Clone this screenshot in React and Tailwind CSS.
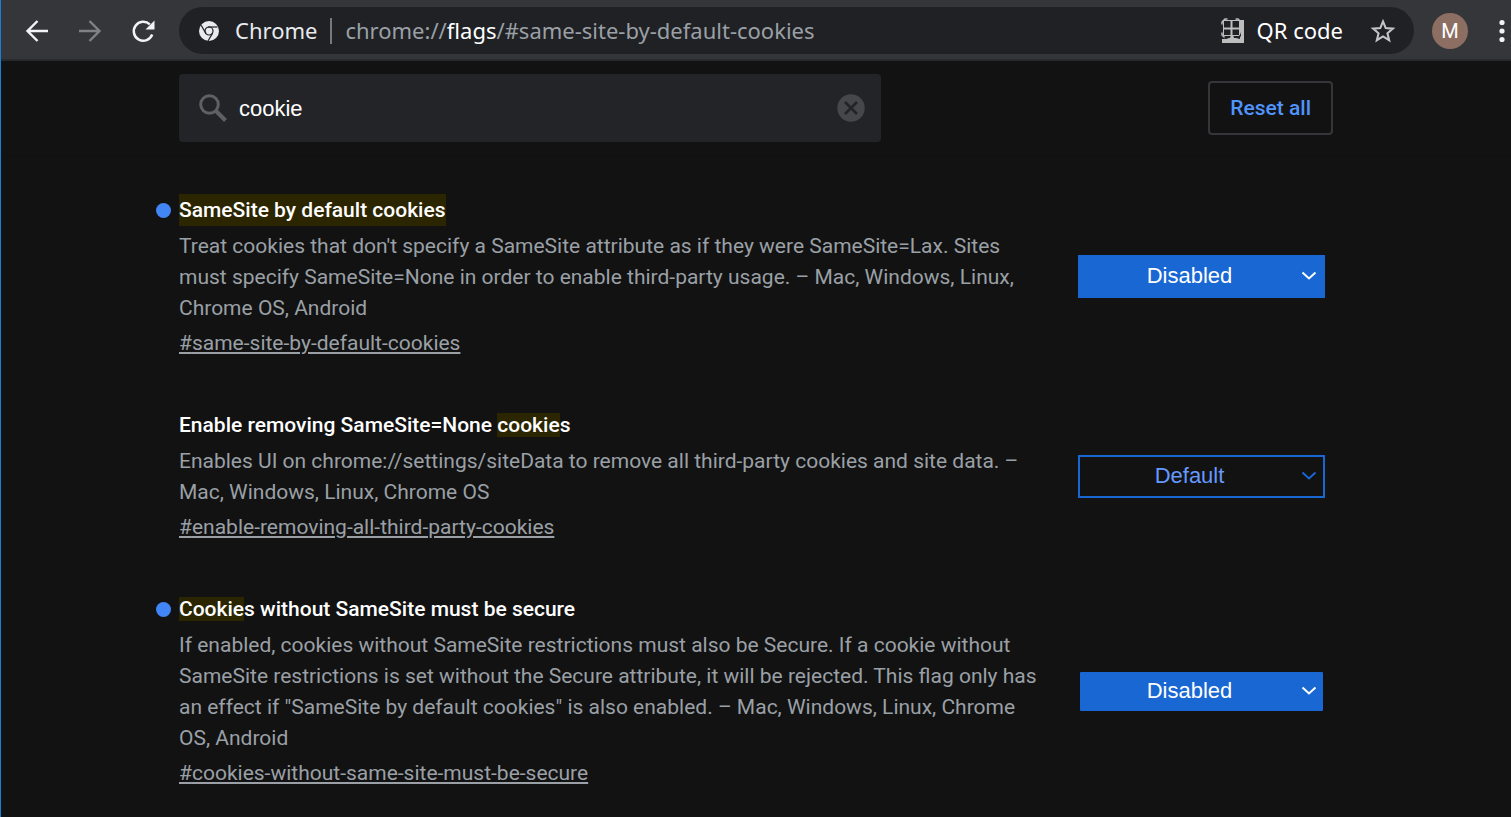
import React, { useState } from "react";

const flags = [
  {
    id: "same-site-by-default-cookies",
    changed: true,
    matchAll: true,
    title: ["", "SameSite by default cookies", ""],
    description:
      "Treat cookies that don't specify a SameSite attribute as if they were SameSite=Lax. Sites must specify SameSite=None in order to enable third-party usage. – Mac, Windows, Linux, Chrome OS, Android",
    value: "Disabled",
    selectClass: "border-[#1967d2] bg-[#1967d2] text-white",
    arrowClass: "text-white",
  },
  {
    id: "enable-removing-all-third-party-cookies",
    changed: false,
    title: ["Enable removing SameSite=None ", "cookie", "s"],
    description:
      "Enables UI on chrome://settings/siteData to remove all third-party cookies and site data. – Mac, Windows, Linux, Chrome OS",
    value: "Default",
    selectClass: "border-[#1967d2] bg-[#121212] text-[#6699ff]",
    arrowClass: "text-[#1967d2]",
  },
  {
    id: "cookies-without-same-site-must-be-secure",
    changed: true,
    title: ["", "Cookie", "s without SameSite must be secure"],
    description:
      'If enabled, cookies without SameSite restrictions must also be Secure. If a cookie without SameSite restrictions is set without the Secure attribute, it will be rejected. This flag only has an effect if "SameSite by default cookies" is also enabled. – Mac, Windows, Linux, Chrome OS, Android',
    value: "Disabled",
    selectClass:
      "border-transparent bg-clip-padding rounded-[3px] bg-[#1967d2] text-white",
    arrowClass: "text-white",
  },
];

function ChromeIcon() {
  return (
    <svg viewBox="0 0 20 20" className="size-5 shrink-0" aria-hidden="true">
      <circle cx="10" cy="10" r="10" fill="#e8eaed" />
      <g fill="none" stroke="#202124" strokeWidth="1.2">
        <circle cx="10" cy="10" r="4" />
        <path d="M9 6h9.500" />
        <path d="M7 12.600 2.200 4.200" />
        <path d="M13.600 12.100 9 20" />
      </g>
    </svg>
  );
}

function QrIcon() {
  return (
    <svg viewBox="0 0 24 26" className="h-[26px] w-6 shrink-0" aria-hidden="true">
      <path d="M19 2h4v23H1v-4h3l3-1h2l1-3h2l1 3h2l4 1z" fill="#bdbdbd" />
      <g fill="none" stroke="#bdbdbd">
        <path d="M10.500 2.500V18M2 10.500h18" strokeWidth="2" />
        <path d="M2.500 2.500h16v15h-16z" strokeWidth="1" />
        <path d="M1 6.500V4l3-3h2.500M14.500 1H17l3 3v2.500M1 14.500V17l3 3" strokeWidth="1.500" />
      </g>
      <path d="M20 14v4l-2 2h-4l3-1 2-2zM2 20l3-1 3 1-3 1z" fill="#202124" />
    </svg>
  );
}

function Toolbar() {
  return (
    <header className="flex h-[61px] items-center border-b-2 border-[#292a2d] bg-[#35363a] pt-0.5 pl-[23px] font-['Noto_Sans','Segoe_UI',sans-serif] text-[#e8eaed]">
      <nav className="flex gap-[27px]">
        <button type="button" aria-label="Back">
          <svg viewBox="0 0 26 26" className="size-[26px]" fill="none" stroke="#f1f3f4" strokeWidth="2.400">
            <path d="M24 13H4M13.500 3 3.500 13l10 10" />
          </svg>
        </button>
        <button type="button" aria-label="Forward">
          <svg viewBox="0 0 26 26" className="size-[26px]" fill="none" stroke="#808185" strokeWidth="2.400">
            <path d="M2 13h20M12.500 3l10 10-10 10" />
          </svg>
        </button>
        <button type="button" aria-label="Reload">
          <svg viewBox="0 0 26 26" className="size-[26px]">
            <path
              d="M22.200 16.500A9.500 9.500 0 1 1 19.800 6.300"
              fill="none"
              stroke="#f1f3f4"
              strokeWidth="2.500"
            />
            <path d="M24.500 2.500v9h-9z" fill="#f1f3f4" />
          </svg>
        </button>
      </nav>

      {/* Address bar */}
      <div className="ml-[23px] flex h-[47px] flex-1 items-center rounded-full bg-[#202124] pr-[18px] pl-5 text-[22px] whitespace-nowrap">
        <ChromeIcon />
        <span className="ml-4">Chrome</span>
        <span className="mx-[13px] h-[26px] w-[2px] bg-[#77787b]" />
        <span className="text-[#9aa0a6]">
          chrome://<span className="text-white">flags</span>
          /#same-site-by-default-cookies
        </span>
        <button type="button" className="ml-auto flex items-center gap-3 text-white">
          <QrIcon />
          QR code
        </button>
        <button type="button" aria-label="Bookmark this tab" className="ml-[27px]">
          <svg viewBox="0 0 24 24" className="size-[26px]" fill="none" stroke="#c4c5c7" strokeWidth="1.900">
            <path d="m12 3.200 2.500 6.100 6.600.5-5 4.300 1.600 6.400-5.700-3.500-5.700 3.500 1.600-6.400-5-4.300 6.600-.5z" />
          </svg>
        </button>
      </div>

      <button
        type="button"
        aria-label="Profile"
        className="ml-[18px] flex size-9 items-center justify-center rounded-full bg-[#8d6e63] font-['Roboto',sans-serif] text-xl text-white"
      >
        M
      </button>
      <button type="button" aria-label="Menu" className="ml-[29px] pr-1">
        <svg viewBox="0 0 10 24" className="h-6 w-[10px]" fill="#f1f3f4">
          <circle cx="5" cy="3.500" r="2.600" />
          <circle cx="5" cy="12" r="2.600" />
          <circle cx="5" cy="20.500" r="2.600" />
        </svg>
      </button>
    </header>
  );
}

function SearchHeader() {
  const [query, setQuery] = useState("cookie");

  return (
    <div className="border-b border-[#101010] px-6 pt-[13px] pb-[14px]">
      <div className="mx-auto flex max-w-[1154px] items-center justify-between">
        <div className="flex h-[68px] w-[702px] items-center rounded bg-[#232427] pr-4 pl-5">
          <svg viewBox="0 0 28 28" className="size-7 shrink-0" fill="none" stroke="#5f6064">
            <circle cx="10.500" cy="10.500" r="8.800" strokeWidth="3" />
            <path d="m17 17 9.500 9.500" strokeWidth="4" />
          </svg>
          <input
            type="text"
            aria-label="Search flags"
            value={query}
            onChange={(e) => setQuery(e.target.value)}
            className="ml-3 min-w-0 flex-1 bg-transparent font-['Liberation_Sans',Arial,sans-serif] text-[22px] text-white outline-none"
          />
          <button type="button" aria-label="Clear search" onClick={() => setQuery("")}>
            <svg viewBox="0 0 28 28" className="size-7">
              <circle cx="14" cy="14" r="13.700" fill="#46474b" />
              <path d="m8 8 12 12M20 8 8 20" stroke="#232427" strokeWidth="2.800" />
            </svg>
          </button>
        </div>
        <button
          type="button"
          className="h-[54px] rounded border-2 border-[#35363a] px-5 pt-0.5 text-[21px] font-medium text-[#5094fb]"
        >
          Reset all
        </button>
      </div>
    </div>
  );
}

function FlagEntry({ flag }) {
  const [before, match, after] = flag.title;

  return (
    <section className="flex items-center justify-between">
      <div className="w-[864px]">
        <div className="-ml-[23px] flex h-8 items-center gap-2">
          <span
            className={`size-[15px] rounded-full ${flag.changed ? "bg-[#4285f4]" : ""}`}
          />
          <h2 className="text-[21px] leading-8 font-medium text-white">
            {before}
            <mark
              className={`bg-[#2b2500] text-white ${flag.matchAll ? "block" : ""}`}
            >
              {match}
            </mark>
            {after}
          </h2>
        </div>
        <p className="mt-[5px] mb-1 leading-[31px]">{flag.description}</p>
        <a href={`#${flag.id}`} className="block w-fit leading-[31px] underline">
          #{flag.id}
        </a>
      </div>

      <div className="relative mr-2 w-[247px] shrink-0">
        <select
          aria-label={flag.title.join("")}
          defaultValue={flag.value}
          className={`block h-[43px] w-full appearance-none border-2 pr-6 pb-0.5 text-center font-['Liberation_Sans',Arial,sans-serif] text-[22px] outline-none ${flag.selectClass}`}
        >
          <option>Default</option>
          <option>Enabled</option>
          <option>Disabled</option>
        </select>
        <svg
          viewBox="0 0 16 10"
          className={`pointer-events-none absolute top-4 right-2 h-[10px] w-4 ${flag.arrowClass}`}
          fill="none"
          stroke="currentColor"
          strokeWidth="2"
        >
          <path d="m1.500 1.500 6.500 6 6.500-6" />
        </svg>
      </div>
    </section>
  );
}

export default function App() {
  return (
    <div className="min-h-screen border-l border-[#1a7fd4] bg-[#121212] font-['Roboto',sans-serif] text-[21px] text-[#9aa0a6]">
      <Toolbar />
      <SearchHeader />
      <main className="px-6 pt-[37px] pb-7">
        <div className="mx-auto flex max-w-[1154px] flex-col gap-[50px]">
          {flags.map((flag) => (
            <FlagEntry key={flag.id} flag={flag} />
          ))}
        </div>
      </main>
    </div>
  );
}
